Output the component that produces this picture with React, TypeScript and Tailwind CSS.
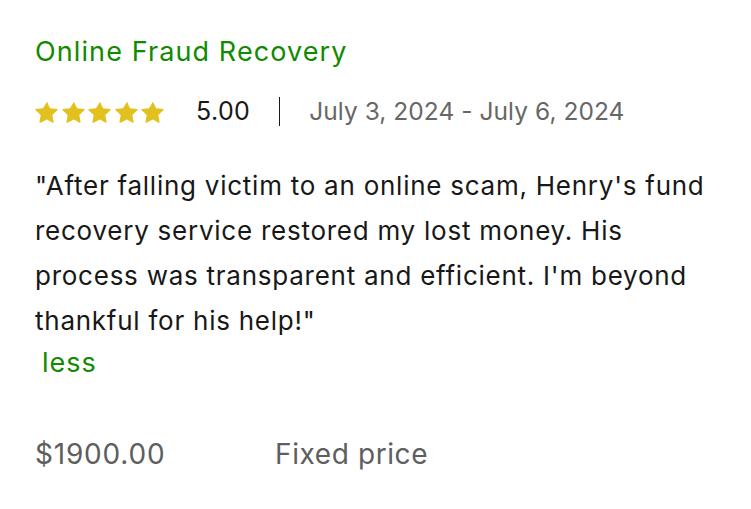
const Star = () => (
  <svg viewBox="0 0 24 24" className="h-[24px] w-[24px]" fill="#e2c01e">
    <path
      d="M12 1.8l3.05 6.35 6.95.9c.6.08.85.82.4 1.24l-5.1 4.8 1.28 6.9c.11.6-.52 1.05-1.05.76L12 19.4l-6.53 3.35c-.53.29-1.16-.16-1.05-.76l1.28-6.9-5.1-4.8c-.45-.42-.2-1.16.4-1.24l6.95-.9z"
      strokeLinejoin="round"
    />
  </svg>
)

export default function App() {
  return (
    <div className="min-h-screen bg-white px-[35px] pt-[34px] font-['Inter',sans-serif]">
      <h3 className="text-[27px] leading-[36px] tracking-[1.1px] text-[#108a00]">
        Online Fraud Recovery
      </h3>

      <div className="mt-[23px] flex items-center">
        <div className="flex gap-[2.5px]">
          {[0, 1, 2, 3, 4].map((i) => (
            <Star key={i} />
          ))}
        </div>
        <span className="ml-[31px] text-[25px] tracking-[0.4px] text-[#181818]">
          5.00
        </span>
        <span className="mx-[29px] h-[29px] w-px bg-[#181818]" />
        <span className="text-[24.5px] tracking-[0.05px] text-[#676767]">
          July 3, 2024 - July 6, 2024
        </span>
      </div>

      <p className="mt-[32px] w-[690px] text-[26px] leading-[45px] tracking-[0.75px] text-[#181818]">
        "After falling victim to an online scam, Henry's fund recovery service
        restored my lost money. His process was transparent and efficient. I'm
        beyond thankful for his help!"
      </p>
      <button className="ml-[7px] text-[27px] leading-[40px] tracking-[1px] text-[#108a00]">
        less
      </button>

      <div className="mt-[50px] flex text-[28px] tracking-[0.8px] text-[#5e5e5e]">
        <span className="w-[240px]">$1900.00</span>
        <span className="tracking-[0.6px]">Fixed price</span>
      </div>
    </div>
  )
}
